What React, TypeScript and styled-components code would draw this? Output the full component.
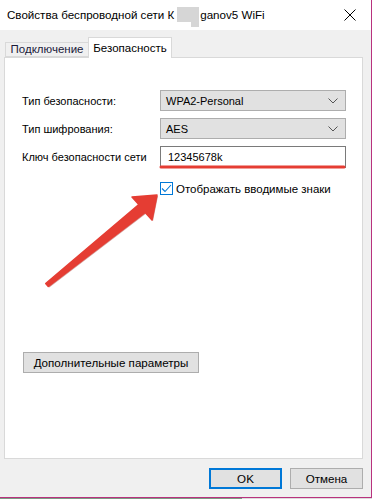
import React from 'react';
import styled, { createGlobalStyle } from 'styled-components';

const GlobalStyle = createGlobalStyle`
  html, body {
    margin: 0;
    padding: 0;
    background: #ffffff;
  }
  * {
    box-sizing: border-box;
  }
`;

const FONT = `"Liberation Sans", Arial, sans-serif`;

const Window = styled.div`
  position: relative;
  width: 372px;
  height: 498px;
  border-right: 1px solid #b8327e;
  border-bottom: 1px solid #b8327e;
  display: flex;
  flex-direction: column;
  font-family: ${FONT};
  font-size: 11px;
  color: #000;
  background: #f0f0f0;
`;

const Desktop = styled.div`
  height: 1px;
  width: 372px;
  background: linear-gradient(to right, #7a9a82 0, #7a9a82 242px, #dcdcdc 242px);
`;

const TitleBar = styled.div`
  height: 30px;
  flex: none;
  background: #ffffff;
  display: flex;
  align-items: center;
  padding-left: 7px;
  padding-bottom: 2px;
`;

const TitleText = styled.span`
  flex: 1;
  white-space: nowrap;
  font-size: 11.6px;
`;

const Redact = styled.span`
  position: relative;
  display: inline-block;
  width: 22px;
  height: 15px;
  margin: 0 1px 0 3px;
  vertical-align: -3px;
  background: #d6d6d6;
  &::after {
    content: '';
    position: absolute;
    right: 0;
    top: 15px;
    width: 8px;
    height: 5px;
    background: #d6d6d6;
  }
`;

const CloseButton = styled.div`
  width: 46px;
  height: 30px;
  display: flex;
  align-items: center;
  justify-content: center;
  margin-top: 2px;
  margin-right: -2px;
`;

const Body = styled.div`
  flex: 1;
  display: flex;
  flex-direction: column;
  padding: 7px 8px 0 4px;
`;

const TabStrip = styled.div`
  display: flex;
  align-items: flex-end;
  height: 20px;
  padding-left: 1px;
  position: relative;
  z-index: 1;
`;

const Tab = styled.div<{ $active?: boolean }>`
  width: 84px;
  height: ${(p) => (p.$active ? '21px' : '15px')};
  margin-bottom: ${(p) => (p.$active ? '-1px' : '0')};
  margin-left: ${(p) => (p.$active ? '-1px' : '0')};
  display: flex;
  justify-content: center;
  align-items: ${(p) => (p.$active ? 'center' : 'flex-end')};
  padding-bottom: ${(p) => (p.$active ? '1px' : '0')};
  background: ${(p) => (p.$active ? '#ffffff' : '#f0f0f0')};
  border: 1px solid #d9d9d9;
  border-bottom: ${(p) => (p.$active ? 'none' : '1px solid #d9d9d9')};
  color: ${(p) => (p.$active ? '#000' : '#1a1a3a')};
  font-size: 11.5px;
  white-space: nowrap;
  line-height: 14px;
`;

const Panel = styled.div`
  height: 402px;
  background: #ffffff;
  border: 1px solid #d9d9d9;
  padding: 32px 0 0 17px;
  display: flex;
  flex-direction: column;
`;

const Form = styled.div`
  display: grid;
  grid-template-columns: 138px 186px;
  row-gap: 7px;
  align-items: center;
`;

const Label = styled.span`
  white-space: nowrap;
`;

const Combo = styled.div`
  height: 21px;
  background: #e1e1e1;
  border: 1px solid #adadad;
  display: flex;
  align-items: center;
  justify-content: space-between;
  padding: 0 7px 0 5px;
`;

const TextField = styled.div`
  height: 22px;
  background: #ffffff;
  border: 1px solid #7a7a7a;
  display: flex;
  align-items: center;
  padding: 0 7px;
`;

const CheckRow = styled.label`
  grid-column: 2;
  margin-top: 7px;
  display: flex;
  align-items: center;
  gap: 3px;
  white-space: nowrap;
  font-size: 11.5px;
`;

const CheckBox = styled.span`
  width: 13px;
  height: 13px;
  border: 1px solid #0078d7;
  background: #fff;
  display: flex;
  align-items: center;
  justify-content: center;
`;

const Spacer = styled.div`
  flex: 1;
`;

const Button = styled.button<{ $default?: boolean }>`
  font-family: ${FONT};
  font-size: 11.6px;
  color: #000;
  height: 21px;
  background: #e1e1e1;
  border: ${(p) => (p.$default ? '2px solid #0078d7' : '1px solid #adadad')};
  padding: 0;
  display: flex;
  align-items: center;
  justify-content: center;
`;

const WideButton = styled(Button)`
  width: 176px;
  margin: 0 0 85px 1px;
`;

const Footer = styled.div`
  display: flex;
  justify-content: flex-end;
  gap: 8px;
  padding-top: 9px;
`;

const FooterButton = styled(Button)`
  width: 73px;
`;

const Annotations = styled.svg`
  position: absolute;
  left: 0;
  top: 0;
  pointer-events: none;
`;

const Chevron = () => (
  <svg width="10" height="6" viewBox="0 0 10 6">
    <path d="M0.5 0.5 L5 5 L9.5 0.5" fill="none" stroke="#555" strokeWidth="1" />
  </svg>
);

export default function App() {
  return (
    <>
      <GlobalStyle />
      <Window>
        <TitleBar>
          <TitleText>
            Свойства беспроводной сети К<Redact />ganov5 WiFi
          </TitleText>
          <CloseButton>
            <svg width="12" height="12" viewBox="0 0 12 12">
              <path d="M0.5 0.5 L11.5 11.5 M11.5 0.5 L0.5 11.5" stroke="#000" strokeWidth="1" />
            </svg>
          </CloseButton>
        </TitleBar>
        <Body>
          <TabStrip>
            <Tab>Подключение</Tab>
            <Tab $active>Безопасность</Tab>
          </TabStrip>
          <Panel>
            <Form>
              <Label>Тип безопасности:</Label>
              <Combo>
                <span>WPA2-Personal</span>
                <Chevron />
              </Combo>
              <Label>Тип шифрования:</Label>
              <Combo>
                <span>AES</span>
                <Chevron />
              </Combo>
              <Label>Ключ безопасности сети</Label>
              <TextField>12345678k</TextField>
              <CheckRow>
                <CheckBox>
                  <svg width="11" height="9" viewBox="0 0 11 9">
                    <path d="M1 4.5 L4 7.5 L10 1" fill="none" stroke="#0078d7" strokeWidth="1.1" />
                  </svg>
                </CheckBox>
                Отображать вводимые знаки
              </CheckRow>
            </Form>
            <Spacer />
            <WideButton>Дополнительные параметры</WideButton>
          </Panel>
          <Footer>
            <FooterButton $default>OK</FooterButton>
            <FooterButton>Отмена</FooterButton>
          </Footer>
        </Body>
        <Annotations width="372" height="498" viewBox="0 0 372 498">
          <line x1="96" y1="55" x2="159" y2="55" stroke="#e53d33" strokeWidth="3" strokeLinecap="round" />
          <line x1="161" y1="167" x2="344" y2="167" stroke="#e53d33" strokeWidth="3" strokeLinecap="round" />
          <polygon
            points="46.7,284.5 139.8,205.6 133,198 158,196 153,221 146.2,213.4 49.3,287.5"
            fill="#a8352e"
            opacity="0.5"
          />
          <polygon
            points="45.7,283.5 138.8,204.6 132,197 157,195 152,220 145.2,212.4 48.3,286.5"
            fill="#e53d33"
            stroke="#e53d33"
            strokeWidth="1.5"
            strokeLinejoin="round"
          />
        </Annotations>
      </Window>
      <Desktop />
    </>
  );
}
